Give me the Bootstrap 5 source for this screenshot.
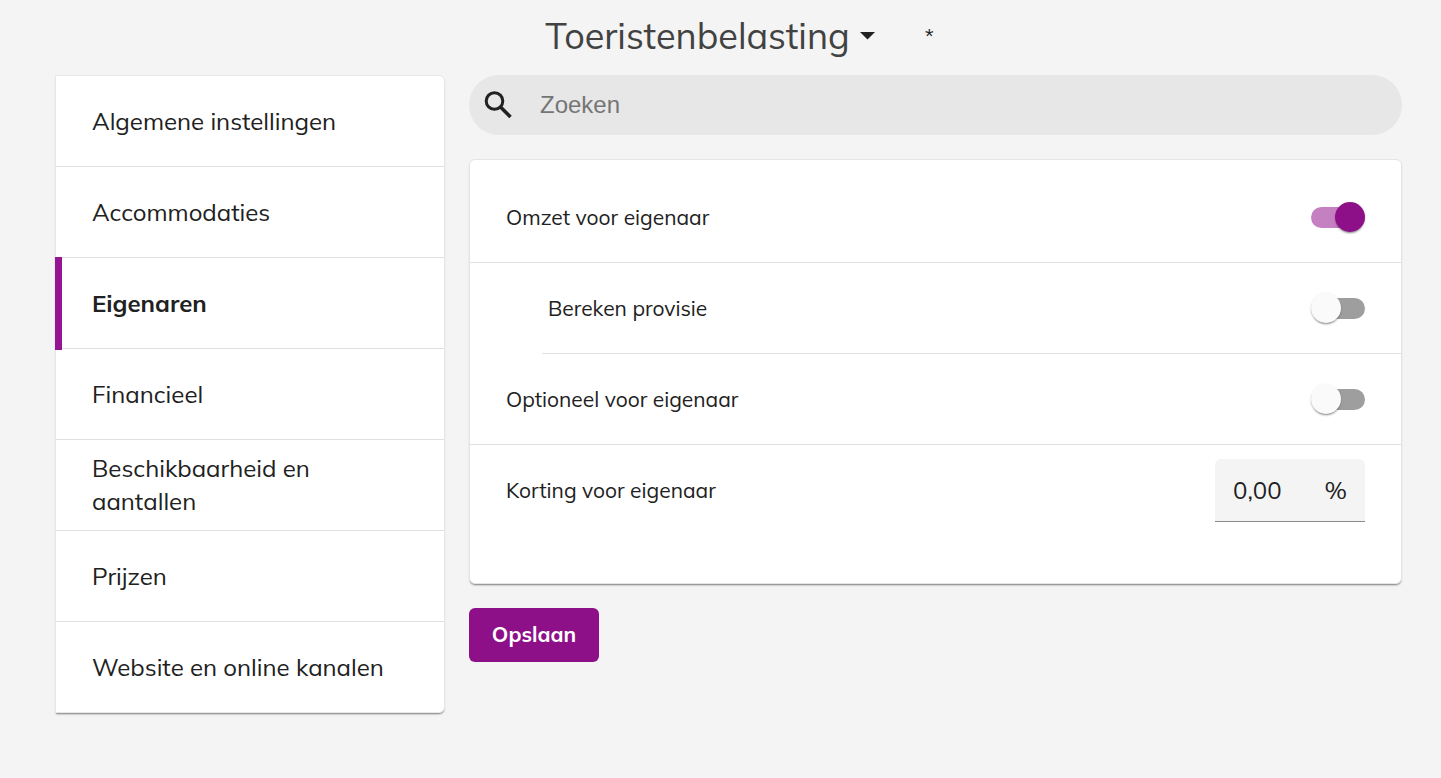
<!DOCTYPE html>
<html lang="nl">
<head>
<meta charset="utf-8">
<meta name="viewport" content="width=device-width, initial-scale=1">
<title>Toeristenbelasting</title>
<link href="https://cdn.jsdelivr.net/npm/bootstrap@5.3.0/dist/css/bootstrap.min.css" rel="stylesheet">
<style>
:root{--brand:#8e1088;--line:#e0e0e0}
body{background:#f4f4f4;color:#212121;font-family:Mulish,Lato,sans-serif;font-size:21px;line-height:32px;font-variant-ligatures:none}
.page-shell{padding:0 39px 24px 55px}
.page-head{height:75px;padding:0 0 4px 22px}
.title-btn,.title-btn:hover{font-size:36px;line-height:48px;color:#424242;gap:10px}
.title-note{margin-left:50px;font-size:20px}
.settings-grid{gap:24px}
.side-menu{flex:0 0 390px;background:#fff;border:1px solid #e8e8e8;border-radius:0 6px 6px 0;box-shadow:0 2px 2px -1px rgba(0,0,0,.5)}
.side-menu a{height:91px;padding:0 36px;font-size:24px;line-height:33px;color:#212121;text-decoration:none;border-bottom:1px solid var(--line)}
.side-menu a:last-child{height:90px;border-bottom:0}
.side-menu a.active{position:relative;font-weight:700}
.side-menu a.active::before{content:"";position:absolute;left:-1px;top:-1px;bottom:-2px;width:7px;background:#941494}
.search-bar{height:60px;background:#e7e7e7;padding:0 14px;gap:27px}
.search-bar input{font:24px/32px "Liberation Sans",sans-serif;color:#212121;outline:0}
.search-bar input::placeholder{color:#757575;opacity:1}
.panel{margin:24px 0;background:#fff;border:1px solid #e4e4e4;border-radius:6px;padding:12px 0 48px;box-shadow:0 2px 2px -1px rgba(0,0,0,.5)}
.setting{height:91px;padding:0 36px;border-bottom:1px solid var(--line)}
.setting.inner-row{margin-left:72px;padding-left:6px}
.setting:last-child{height:90px;border-bottom:0}
.toggle{appearance:none;position:relative;width:54px;height:21px;margin:0;background:#9e9e9e;border-radius:11px}
.toggle::before{content:"";position:absolute;left:0;top:-5px;width:30px;height:30px;border-radius:50%;background:#fafafa;box-shadow:0 2px 2px -1px rgba(0,0,0,.4),0 1px 3px rgba(0,0,0,.12)}
.toggle:checked{background:#c580c1}
.toggle:checked::before{left:24px;background:var(--brand)}
.amount{width:150px;height:63px;background:#f4f4f4;border-bottom:1px solid #8a8a8a;border-radius:6px 6px 0 0;padding:0 18px;font-size:24px}
.amount input{min-width:0;outline:0;color:#212121}
.save-btn,.save-btn:hover{height:54px;width:130px;background:var(--brand);color:#fff;font-size:21px;font-weight:700;border-radius:6px}
</style>
</head>
<body>
<div class="page-shell">
<header class="page-head d-flex justify-content-center align-items-center">
<button type="button" class="title-btn btn d-flex align-items-center p-0 border-0">Toeristenbelasting
<svg width="15" height="8" viewBox="0 0 15 8" aria-hidden="true"><path d="M0 0h15L7.500 7.500z" fill="#212121"/></svg></button>
<span class="title-note">*</span>
</header>
<main class="settings-grid d-flex align-items-start">
<nav class="side-menu d-flex flex-column">
<a href="#" class="d-flex align-items-center">Algemene instellingen</a>
<a href="#" class="d-flex align-items-center">Accommodaties</a>
<a href="#" class="d-flex align-items-center active" aria-current="page">Eigenaren</a>
<a href="#" class="d-flex align-items-center">Financieel</a>
<a href="#" class="d-flex align-items-center">Beschikbaarheid en aantallen</a>
<a href="#" class="d-flex align-items-center">Prijzen</a>
<a href="#" class="d-flex align-items-center">Website en online kanalen</a>
</nav>
<form class="flex-grow-1">
<label class="search-bar d-flex align-items-center rounded-pill">
<svg width="30" height="30" viewBox="0 0 30 30" fill="none" stroke="#212121" stroke-width="3" aria-hidden="true"><circle cx="11.500" cy="11" r="8.300"/><path d="M17.500 17l10 10" stroke-width="3.600"/></svg>
<input type="search" class="flex-grow-1 border-0 bg-transparent p-0" placeholder="Zoeken" aria-label="Zoeken">
</label>
<section class="panel">
<div class="setting d-flex align-items-center justify-content-between"><label for="omzet">Omzet voor eigenaar</label><input type="checkbox" role="switch" class="toggle" id="omzet" checked></div>
<div class="setting inner-row d-flex align-items-center justify-content-between"><label for="provisie">Bereken provisie</label><input type="checkbox" role="switch" class="toggle" id="provisie"></div>
<div class="setting d-flex align-items-center justify-content-between"><label for="optioneel">Optioneel voor eigenaar</label><input type="checkbox" role="switch" class="toggle" id="optioneel"></div>
<div class="setting d-flex align-items-center justify-content-between"><label for="korting">Korting voor eigenaar</label><div class="amount d-flex align-items-center"><input type="text" id="korting" value="0,00" class="flex-grow-1 w-100 border-0 bg-transparent p-0"><span>%</span></div></div>
</section>
<button type="submit" class="save-btn btn border-0 p-0">Opslaan</button>
</form>
</main>
</div>
<script src="https://cdn.jsdelivr.net/npm/bootstrap@5.3.0/dist/js/bootstrap.bundle.min.js"></script>
</body>
</html>
